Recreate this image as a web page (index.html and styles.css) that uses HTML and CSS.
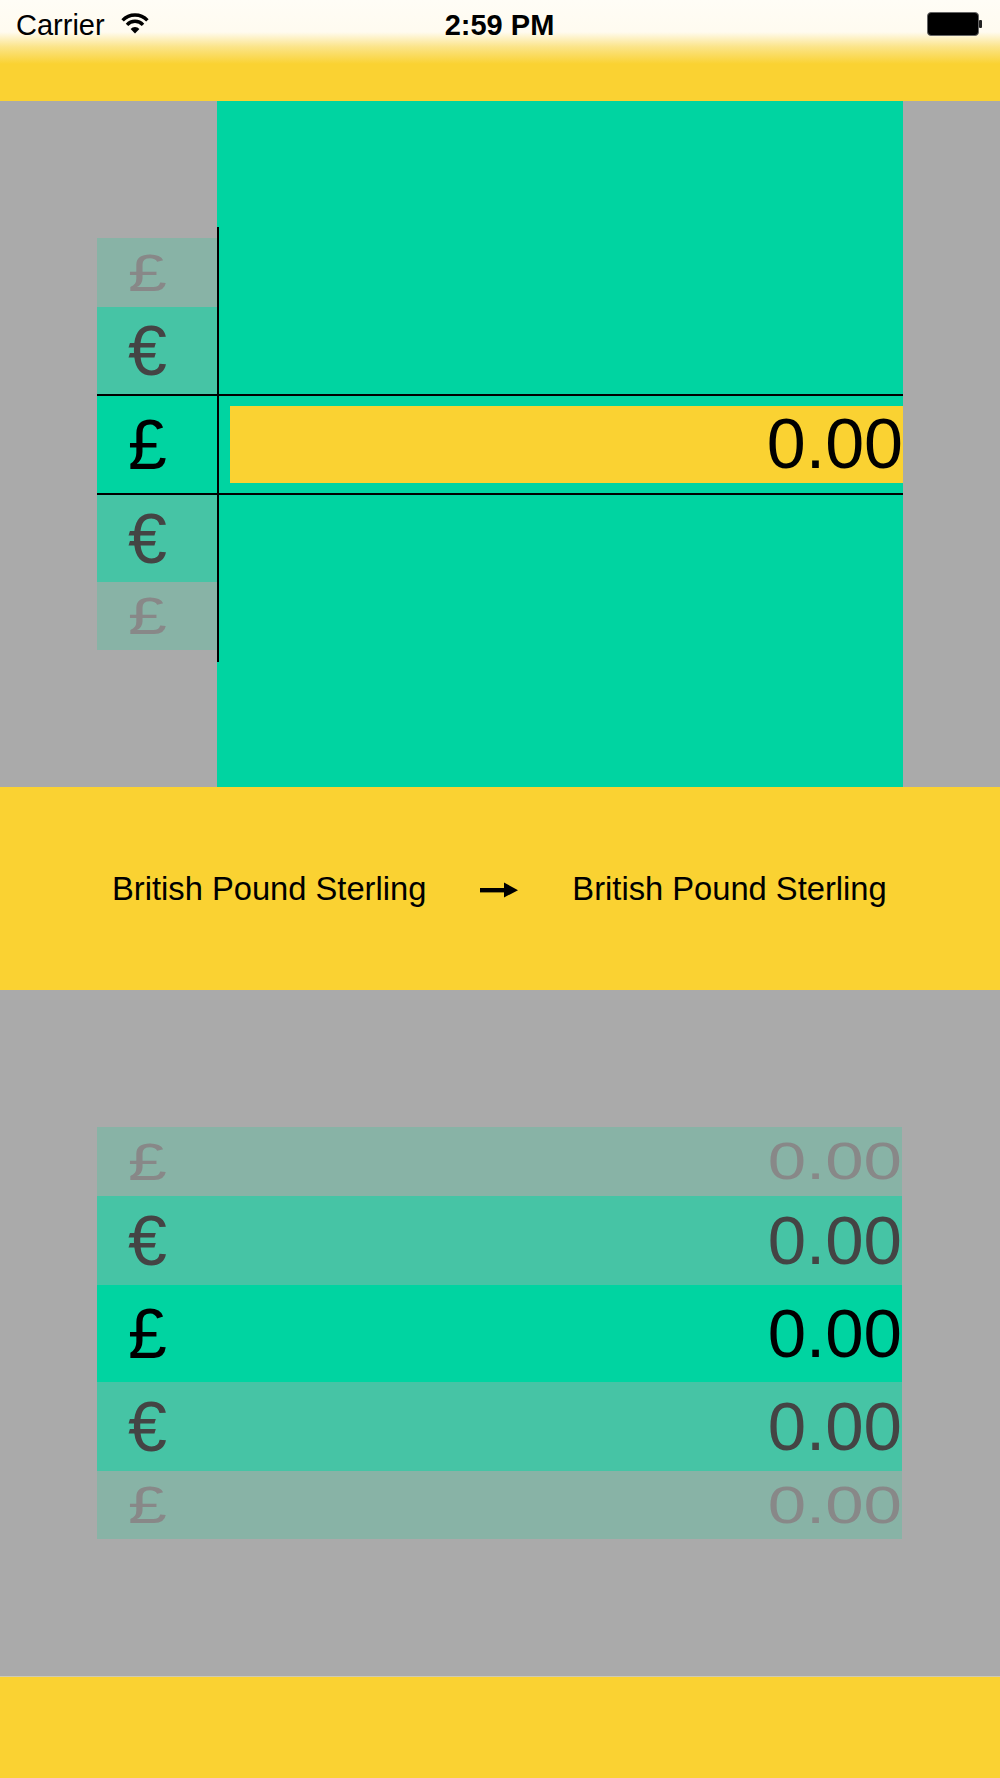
FILE: index.html
```html
<!DOCTYPE html>
<html>
<head>
<meta charset="utf-8">
<link rel="stylesheet" href="styles.css">
</head>
<body>
<div class="app">
  <header class="header">
    <div class="status">
      <div class="status-left">
        <span class="carrier">Carrier</span>
        <svg class="wifi" width="28" height="22" viewBox="0 0 28 22">
          <path d="M1.6 8.4 A17 17 0 0 1 26.4 8.4" fill="none" stroke="#000" stroke-width="3.4"/>
          <path d="M6 12.8 A10.8 10.8 0 0 1 22 12.8" fill="none" stroke="#000" stroke-width="3.4"/>
          <path d="M14 21.5 L9.6 16.9 A6 6 0 0 1 18.4 16.9 Z" fill="#000"/>
        </svg>
      </div>
      <div class="time">2:59 PM</div>
      <div class="status-right">
        <svg class="battery" width="56" height="24" viewBox="0 0 56 24">
          <rect x="0.5" y="0.5" width="51" height="23" rx="3.5" fill="#000" stroke="#666" stroke-width="1"/>
          <rect x="52" y="8" width="3" height="8" rx="1" fill="#222"/>
        </svg>
      </div>
    </div>
  </header>

  <section class="top">
    <div class="wheel-col">
      <div class="row far"><span class="sym">£</span></div>
      <div class="row near"><span class="sym">€</span></div>
      <div class="row sel sel-top"><span class="sym">£</span></div>
      <div class="row near"><span class="sym">€</span></div>
      <div class="row far last"><span class="sym">£</span></div>
    </div>
    <div class="teal-col">
      <div class="amount-input">0.00</div>
    </div>
    <div class="line hline hline-1"></div>
    <div class="line hline hline-2"></div>
    <div class="line vline"></div>
  </section>

  <section class="banner">
    <span class="cur-name">British Pound Sterling</span>
    <svg class="arrow" width="38" height="16" viewBox="0 0 38 16">
      <rect x="0" y="6" width="26" height="4.4" fill="#000"/>
      <polygon points="24,0.5 38,8.2 24,15.5" fill="#000"/>
    </svg>
    <span class="cur-name">British Pound Sterling</span>
  </section>

  <section class="bottom">
    <div class="wheel-full">
      <div class="row far"><span class="sym">£</span><span class="val">0.00</span></div>
      <div class="row near b-near"><span class="sym">€</span><span class="val">0.00</span></div>
      <div class="row sel b-sel"><span class="sym">£</span><span class="val">0.00</span></div>
      <div class="row near b-near"><span class="sym">€</span><span class="val">0.00</span></div>
      <div class="row far last"><span class="sym">£</span><span class="val">0.00</span></div>
    </div>
  </section>

  <footer class="footer"></footer>
</div>
</body>
</html>
```

FILE: styles.css
```css
* { box-sizing: border-box; }
html, body { margin: 0; padding: 0; }
body {
  width: 1000px;
  height: 1778px;
  font-family: "Liberation Sans", Arial, sans-serif;
  background: #aaaaaa;
  overflow: hidden;
}
.app { width: 1000px; display: flex; flex-direction: column; }

.header {
  height: 101px;
  background: linear-gradient(to bottom, #fffdf6 0px, #fffbf0 32px, #fbe488 47px, #fad232 64px, #fad232 101px);
}
.status {
  display: grid;
  grid-template-columns: 1fr auto 1fr;
  align-items: start;
  padding: 12px 17px 0 16px;
  line-height: 27px;
  font-size: 29px;
  color: #000;
}
.status-left { display: flex; align-items: flex-start; gap: 16px; }
.wifi { margin-top: 0px; }
.time { font-weight: bold; font-size: 29px; text-align: center; }
.status-right { display: flex; justify-content: flex-end; }

.top {
  position: relative;
  height: 686px;
  display: flex;
  background: #aaaaaa;
}
.wheel-col {
  width: 120px;
  margin-left: 97px;
  padding-top: 137px;
  display: flex;
  flex-direction: column;
}
.teal-col {
  width: 686px;
  height: 686px;
  background: #00d4a1;
  padding: 305px 0 0 13px;
}
.amount-input {
  height: 77px;
  background: #fad232;
  font-size: 70px;
  line-height: 77px;
  text-align: right;
  color: #000;
  white-space: nowrap;
}

.row {
  display: flex;
  align-items: center;
  justify-content: space-between;
  padding-left: 31px;
  font-size: 70px;
  line-height: 1;
  white-space: nowrap;
  flex-shrink: 0;
}
.row.far { height: 69px; background: #88b3a6; color: #888888; }
.row.far.last { height: 68px; }
.row.far .sym, .row.far .val { display: inline-block; transform: scaleY(0.74); }
.row.near { height: 87px; background: #46c4a5; color: #444444; }
.row.sel { background: #00d4a1; color: #000; }
.row.sel-top { height: 101px; }
.row.b-near { height: 89px; }
.row.b-sel { height: 97px; }
.val { font-size: 69px; }

.line { position: absolute; background: #000; }
.hline { left: 97px; width: 806px; height: 2px; }
.hline-1 { top: 293px; }
.hline-2 { top: 392px; }
.vline { left: 217px; top: 126px; width: 2px; height: 435px; }

.banner {
  height: 203px;
  background: #fad232;
  display: flex;
  align-items: center;
  padding-left: 112px;
  gap: 54px;
}
.cur-name { font-size: 32.7px; color: #000; white-space: nowrap; }
.arrow { margin-top: 2px; }

.bottom {
  height: 686px;
  background: #aaaaaa;
  padding: 137px 0 0 97px;
}
.wheel-full {
  width: 805px;
  display: flex;
  flex-direction: column;
}

.footer {
  height: 102px;
  background: #fad232;
  border-top: 1px solid #cfcab2;
}
```
